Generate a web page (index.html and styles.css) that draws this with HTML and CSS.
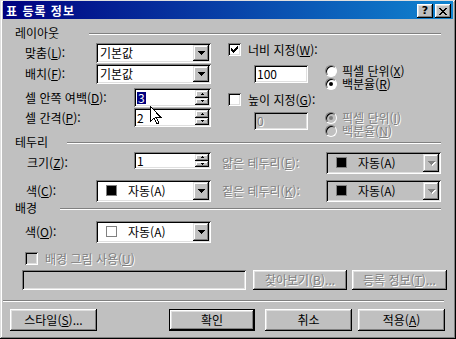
FILE: index.html
```html
<!DOCTYPE html>
<html lang="ko">
<head>
    <meta charset="UTF-8">
    <title>표 등록 정보</title>
    <link rel="stylesheet" href="styles.css">
</head>
<body>
<div class="window">
    <!-- Title bar -->
    <div class="titlebar">
        <span class="title">표 등록 정보</span>
        <div class="title-buttons">
            <span class="tbtn">?</span>
            <span class="tbtn">
                <svg width="8" height="7" viewBox="0 0 8 7" shape-rendering="crispEdges"><path d="M0 0h2v1h1v1h2v-1h1v-1h2v1h-1v1h-1v1h-1v1h1v1h1v1h1v1h-2v-1h-1v-1h-2v1h-1v1h-2v-1h1v-1h1v-1h1v-1h-1v-1h-1v-1h-1z" fill="#000"/></svg>
            </span>
        </div>
    </div>

    <div class="content">
        <!-- 레이아웃 -->
        <div class="group-title first"><span class="gt-layout">레이아웃</span><i class="etch"></i></div>
        <div class="section sec-layout">
            <div class="col-left">
                <div class="row row-a">
                    <span class="lbl lbl-combo">맞춤(<u>L</u>):</span>
                    <div class="combo"><span class="combo-text">기본값</span><span class="drop"><svg class="arrow" width="7" height="4" viewBox="0 0 7 4" shape-rendering="crispEdges"><path d="M0 0h7v1h-1v1h-1v1h-1v1h-1v-1h-1v-1h-1v-1h-1z"/></svg></span></div>
                </div>
                <div class="row row-b">
                    <span class="lbl lbl-combo">배치(<u>F</u>):</span>
                    <div class="combo"><span class="combo-text">기본값</span><span class="drop"><svg class="arrow" width="7" height="4" viewBox="0 0 7 4" shape-rendering="crispEdges"><path d="M0 0h7v1h-1v1h-1v1h-1v1h-1v-1h-1v-1h-1v-1h-1z"/></svg></span></div>
                </div>
                <div class="row row-c">
                    <span class="lbl lbl-spin">셀 안쪽 여백(<u>D</u>):</span>
                    <div class="spin"><span class="spin-text"><span class="selected">3</span></span><span class="spin-btns"><span class="sb"><svg width="3" height="2" viewBox="0 0 3 2" shape-rendering="crispEdges"><path d="M1 0h1v1h1v1h-3v-1h1z"/></svg></span><span class="sb"><svg width="3" height="2" viewBox="0 0 3 2" shape-rendering="crispEdges"><path d="M0 0h3v1h-1v1h-1v-1h-1z"/></svg></span></span></div>
                </div>
                <div class="row row-d">
                    <span class="lbl lbl-spin">셀 간격(<u>P</u>):</span>
                    <div class="spin"><span class="spin-text">2</span><span class="spin-btns"><span class="sb"><svg width="3" height="2" viewBox="0 0 3 2" shape-rendering="crispEdges"><path d="M1 0h1v1h1v1h-3v-1h1z"/></svg></span><span class="sb"><svg width="3" height="2" viewBox="0 0 3 2" shape-rendering="crispEdges"><path d="M0 0h3v1h-1v1h-1v-1h-1z"/></svg></span></span></div>
                </div>
            </div>

            <div class="col-right">
                <div class="chk-row">
                    <span class="checkbox"><svg width="7" height="7" viewBox="0 0 7 7" shape-rendering="crispEdges"><path d="M6 0h1v3h-1v1h-1v1h-1v1h-1v1h-1v-1h-1v-1h-1v-3h1v1h1v1h1v-1h1v-1h1v-1h1z"/></svg></span>
                    <span>너비 지정(<u>W</u>):</span>
                </div>
                <div class="size-row">
                    <div class="field">100</div>
                    <div class="radios">
                        <div class="radio-row"><span class="radio"></span><span>픽셀 단위(<u>X</u>)</span></div>
                        <div class="radio-row"><span class="radio checked"></span><span>백분율(<u>R</u>)</span></div>
                    </div>
                </div>
                <div class="chk-row second">
                    <span class="checkbox"></span>
                    <span>높이 지정(<u>G</u>):</span>
                </div>
                <div class="size-row second">
                    <div class="field disabled"><span class="dis-text">0</span></div>
                    <div class="radios">
                        <div class="radio-row dis-text"><span class="radio off checked"></span><span>픽셀 단위(<u>I</u>)</span></div>
                        <div class="radio-row dis-text"><span class="radio off"></span><span>백분율(<u>N</u>)</span></div>
                    </div>
                </div>
            </div>
        </div>

        <!-- 테두리 -->
        <div class="group-title"><span class="gt-border">테두리</span><i class="etch"></i></div>
        <div class="section sec-border">
            <div class="border-row row-e">
                <div class="half-left">
                    <span class="lbl lbl-spin indent">크기(<u>Z</u>):</span>
                    <div class="spin small"><span class="spin-text">1</span><span class="spin-btns"><span class="sb"><svg width="3" height="2" viewBox="0 0 3 2" shape-rendering="crispEdges"><path d="M1 0h1v1h1v1h-3v-1h1z"/></svg></span><span class="sb"><svg width="3" height="2" viewBox="0 0 3 2" shape-rendering="crispEdges"><path d="M0 0h3v1h-1v1h-1v-1h-1z"/></svg></span></span></div>
                </div>
                <div class="half-right">
                    <span class="lbl lbl-right dis-text">얇은 테두리(<u>E</u>):</span>
                    <div class="combo tall disabled"><span class="combo-text"><i class="swatch"></i>자동(A)</span><span class="drop"><svg class="arrow dim" width="7" height="4" viewBox="0 0 7 4" shape-rendering="crispEdges"><path d="M0 0h7v1h-1v1h-1v1h-1v1h-1v-1h-1v-1h-1v-1h-1z"/></svg></span></div>
                </div>
            </div>
            <div class="border-row row-f">
                <div class="half-left">
                    <span class="lbl lbl-combo indent1">색(<u>C</u>):</span>
                    <div class="combo tall"><span class="combo-text"><i class="swatch"></i>자동(A)</span><span class="drop"><svg class="arrow" width="7" height="4" viewBox="0 0 7 4" shape-rendering="crispEdges"><path d="M0 0h7v1h-1v1h-1v1h-1v1h-1v-1h-1v-1h-1v-1h-1z"/></svg></span></div>
                </div>
                <div class="half-right">
                    <span class="lbl lbl-right dis-text">짙은 테두리(<u>K</u>):</span>
                    <div class="combo tall disabled"><span class="combo-text"><i class="swatch"></i>자동(A)</span><span class="drop"><svg class="arrow dim" width="7" height="4" viewBox="0 0 7 4" shape-rendering="crispEdges"><path d="M0 0h7v1h-1v1h-1v1h-1v1h-1v-1h-1v-1h-1v-1h-1z"/></svg></span></div>
                </div>
            </div>
        </div>

        <!-- 배경 -->
        <div class="group-title"><span class="gt-bg">배경</span><i class="etch"></i></div>
        <div class="section sec-bg">
            <div class="row row-g">
                <span class="lbl lbl-combo">색(<u>O</u>):</span>
                <div class="combo tall"><span class="combo-text"><i class="swatch white"></i>자동(A)</span><span class="drop"><svg class="arrow" width="7" height="4" viewBox="0 0 7 4" shape-rendering="crispEdges"><path d="M0 0h7v1h-1v1h-1v1h-1v1h-1v-1h-1v-1h-1v-1h-1z"/></svg></span></div>
            </div>
            <div class="chk-row dis-row">
                <span class="checkbox off"></span>
                <span class="dis-text">배경 그림 사용(<u>U</u>)</span>
            </div>
            <div class="file-row">
                <div class="field disabled wide"></div>
                <span class="button dis-text browse">찾아보기(<u>B</u>)...</span>
                <span class="button dis-text props">등록 정보(<u>T</u>)...</span>
            </div>
        </div>

        <i class="separator"></i>

        <div class="button-row">
            <span class="button style-btn">스타일(<u>S</u>)...</span>
            <span class="button default ok-btn">확인</span>
            <span class="button cancel-btn">취소</span>
            <span class="button apply-btn">적용(<u>A</u>)</span>
        </div>
    </div>

    <!-- mouse pointer over the dialog -->
    <svg class="cursor" width="12" height="19" viewBox="0 0 12 19" shape-rendering="crispEdges">
        <path d="M0.5 0.5v15l3.5-3.5 3 6 2-1-3-5.5h5z" fill="#fff" stroke="#000"/>
    </svg>
</div>
</body>
</html>
```

FILE: styles.css
```css
* {
    margin: 0;
    padding: 0;
    box-sizing: border-box;
}

:root {
    --face: #c0c0c0;
    --shadow: #808080;
    --light: #dfdfdf;
    --white: #ffffff;
    --dark: #000000;
}

body {
    font-family: "Noto Sans CJK KR", "DejaVu Sans", sans-serif;
    font-size: 12px;
    line-height: 12px;
    color: #000;
    background-color: var(--face);
}

u {
    text-decoration: underline;
    text-underline-offset: 1px;
}

/* Window frame */
.window {
    position: relative;
    width: 456px;
    height: 339px;
    padding: 1px 3px 3px 3px;
    background-color: var(--face);
    box-shadow: inset -1px -1px var(--dark), inset 1px 1px var(--light), inset -2px -2px var(--shadow), inset 2px 2px var(--white);
    overflow: hidden;
}

.titlebar {
    height: 18px;
    display: flex;
    align-items: center;
    justify-content: space-between;
    padding: 2px 2px 0 3px;
    background: linear-gradient(to right, #000080, #1084d0);
}

.title {
    color: #fff;
    font-weight: bold;
    font-size: 12px;
    letter-spacing: 1px;
}

.title-buttons {
    display: flex;
    gap: 2px;
}

.tbtn {
    width: 16px;
    height: 14px;
    display: flex;
    align-items: center;
    justify-content: center;
    font-family: "DejaVu Sans", sans-serif;
    font-weight: bold;
    font-size: 11px;
    background-color: var(--face);
    box-shadow: inset -1px -1px var(--dark), inset 1px 1px var(--white), inset -2px -2px var(--shadow), inset 2px 2px var(--light);
}

/* Group headings with etched line */
.group-title {
    display: flex;
    align-items: center;
    height: 12px;
    margin: 0 12px;
}

.group-title.first {
    margin-top: 8px;
}

.gt-layout { width: 74px; }
.gt-border { width: 52px; }
.gt-bg { width: 45px; }

.etch {
    flex: 1;
    height: 2px;
    margin-top: 2px;
    border-top: 1px solid var(--shadow);
    border-bottom: 1px solid var(--white);
}

.section {
    padding-left: 22px;
}

.sec-layout {
    display: flex;
}

.col-left {
    width: 187px;
}

.col-right {
    margin-left: 16px;
}

.row {
    display: flex;
    align-items: center;
}

.row-a { margin-top: 4px; height: 20px; }
.row-b { margin-top: 1px; height: 20px; }
.row-c { margin-top: 4px; height: 19px; }
.row-d { margin-top: 1px; height: 19px; }

.lbl-combo { width: 71px; }
.lbl-spin { width: 109px; }
.lbl-right { width: 104px; }
.indent { padding-left: 2px; }
.indent1 { padding-left: 1px; }

/* Sunken controls */
.combo,
.spin,
.field {
    display: flex;
    align-items: stretch;
    background-color: var(--white);
    padding: 2px;
    box-shadow: inset 1px 1px var(--shadow), inset -1px -1px var(--white), inset 2px 2px var(--dark), inset -2px -2px var(--light);
}

.combo {
    width: 115px;
    height: 20px;
}

.combo.tall {
    height: 22px;
}

.combo.disabled {
    background-color: var(--face);
}

.combo-text {
    flex: 1;
    display: flex;
    align-items: center;
    padding-left: 2px;
}

.swatch {
    width: 11px;
    height: 11px;
    margin: 0 11px 0 6px;
    background-color: #000;
    border: 1px solid var(--shadow);
}

.swatch.white {
    background-color: #fff;
}

.drop {
    width: 16px;
    display: flex;
    align-items: center;
    justify-content: center;
    background-color: var(--face);
    box-shadow: inset -1px -1px var(--dark), inset 1px 1px var(--light), inset -2px -2px var(--shadow), inset 2px 2px var(--white);
}

.arrow {
    fill: #000;
}

.arrow.dim {
    fill: var(--shadow);
    filter: drop-shadow(1px 1px 0 #fff);
}

.spin {
    width: 77px;
    height: 19px;
}

.spin.small {
    height: 17px;
    align-self: flex-start;
    margin-top: 1px;
}

.spin-text {
    flex: 1;
    display: flex;
    align-items: center;
    padding-left: 1px;
}

.selected {
    background-color: #000080;
    color: #fff;
    padding: 0 1px;
}

.spin-btns {
    width: 14px;
    display: flex;
    flex-direction: column;
}

.sb {
    flex: 1;
    display: flex;
    align-items: center;
    justify-content: center;
    background-color: var(--face);
    box-shadow: inset -1px -1px var(--dark), inset 1px 1px var(--light), inset -2px -2px var(--shadow), inset 2px 2px var(--white);
}

.sb svg {
    fill: #000;
}

/* Checkboxes and radios */
.chk-row {
    display: flex;
    align-items: center;
    gap: 7px;
    height: 13px;
    margin-top: 4px;
}

.checkbox {
    width: 13px;
    height: 13px;
    display: flex;
    align-items: center;
    justify-content: center;
    background-color: var(--white);
    box-shadow: inset 1px 1px var(--shadow), inset -1px -1px var(--white), inset 2px 2px var(--dark), inset -2px -2px var(--light);
}

.checkbox.off {
    background-color: var(--face);
}

.size-row {
    display: flex;
    height: 26px;
    margin-top: 7px;
}

.size-row.second {
    margin-top: 4px;
}

.size-row .field {
    width: 54px;
    height: 18px;
    margin: 2px 0 0 26px;
    align-items: center;
    padding-left: 3px;
}

.field.disabled {
    background-color: var(--face);
}

.radios {
    display: flex;
    flex-direction: column;
    gap: 1px;
    margin-left: 17px;
    padding-top: 2px;
}

.radio-row {
    display: flex;
    align-items: center;
    gap: 5px;
    height: 12px;
}

.radio {
    position: relative;
    width: 12px;
    height: 12px;
    border-radius: 50%;
    background-color: var(--white);
    border: 1px solid;
    border-color: var(--shadow) var(--white) var(--white) var(--shadow);
    box-shadow: inset 1px 1px var(--dark);
}

.radio.off {
    background-color: var(--face);
    text-shadow: none;
}

.radio.checked::after {
    content: "";
    position: absolute;
    left: 3px;
    top: 3px;
    width: 4px;
    height: 4px;
    border-radius: 50%;
    background-color: #000;
}

.radio.off.checked::after {
    background-color: var(--shadow);
}

.dis-text {
    color: var(--shadow);
    text-shadow: 1px 1px 0 #fff;
}

/* 테두리 section */
.border-row {
    display: flex;
    align-items: center;
    height: 23px;
}

.row-e { margin-top: 3px; }
.row-f { margin-top: 5px; }

.half-left {
    width: 197px;
    display: flex;
    align-items: center;
    height: 100%;
}

.half-right {
    display: flex;
    align-items: center;
}

/* 배경 section */
.row-g {
    margin-top: 6px;
    height: 23px;
}

.dis-row {
    margin-top: 9px;
}

.file-row {
    display: flex;
    height: 20px;
    margin: 5px 0 0 -3px;
}

.field.wide {
    width: 224px;
    height: 20px;
}

.browse {
    width: 94px;
    margin-left: 7px;
}

.props {
    width: 95px;
    margin-left: 5px;
}

.separator {
    display: block;
    width: 441px;
    height: 2px;
    margin-top: 10px;
    border-top: 1px solid var(--shadow);
    border-bottom: 1px solid var(--white);
}

/* Buttons */
.button {
    display: flex;
    align-items: center;
    justify-content: center;
    background-color: var(--face);
    box-shadow: inset -1px -1px var(--dark), inset 1px 1px var(--white), inset -2px -2px var(--shadow), inset 2px 2px var(--light);
}

.button.default {
    border: 1px solid #000;
}

.button-row {
    display: flex;
    height: 22px;
    margin-top: 7px;
    padding-left: 7px;
}

.style-btn { width: 87px; }
.ok-btn { width: 86px; margin-left: 72px; }
.cancel-btn { width: 87px; margin-left: 10px; }
.apply-btn { width: 87px; margin-left: 6px; }

.cursor {
    position: absolute;
    left: 150px;
    top: 106px;
}
```
